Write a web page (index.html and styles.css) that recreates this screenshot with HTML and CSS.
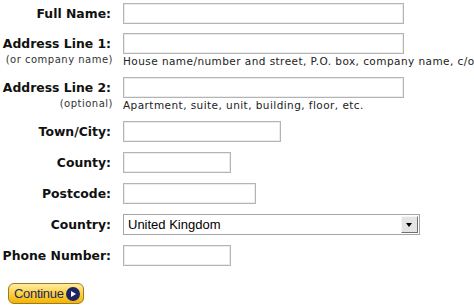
FILE: index.html
```html
<!DOCTYPE html>
<html lang="en">
<head>
    <meta charset="UTF-8">
    <meta name="viewport" content="width=device-width, initial-scale=1.0">
    <title>Delivery Address</title>
    <link rel="stylesheet" href="styles.css">
</head>
<body>
    <form class="address-form" id="addressForm">
        <div class="row">
            <label class="label" for="fullName">Full Name:</label>
            <div class="field"><input type="text" id="fullName" class="input wide"></div>
        </div>
        <div class="row first-address">
            <label class="label" for="addr1">Address Line 1:<span class="note">(or company name)</span></label>
            <div class="field">
                <input type="text" id="addr1" class="input wide">
                <span class="help">House name/number and street, P.O. box, company name, c/o</span>
            </div>
        </div>
        <div class="row">
            <label class="label" for="addr2">Address Line 2:<span class="note">(optional)</span></label>
            <div class="field">
                <input type="text" id="addr2" class="input wide">
                <span class="help">Apartment, suite, unit, building, floor, etc.</span>
            </div>
        </div>
        <div class="row">
            <label class="label" for="town">Town/City:</label>
            <div class="field"><input type="text" id="town" class="input town"></div>
        </div>
        <div class="row">
            <label class="label" for="county">County:</label>
            <div class="field"><input type="text" id="county" class="input short"></div>
        </div>
        <div class="row">
            <label class="label" for="postcode">Postcode:</label>
            <div class="field"><input type="text" id="postcode" class="input postcode"></div>
        </div>
        <div class="row">
            <label class="label" for="country">Country:</label>
            <div class="field">
                <span class="select-wrap">
                    <select id="country" class="select">
                        <option>United Kingdom</option>
                        <option>Ireland</option>
                        <option>France</option>
                    </select>
                    <span class="select-btn"></span>
                </span>
            </div>
        </div>
        <div class="row">
            <label class="label" for="phone">Phone Number:</label>
            <div class="field"><input type="text" id="phone" class="input short"></div>
        </div>

        <button type="submit" class="continue">Continue <span class="arrow"></span></button>
    </form>
</body>
</html>
```

FILE: styles.css
```css
body {
    margin: 0;
    padding: 0;
    font-family: "DejaVu Sans", Verdana, sans-serif;
    color: #000;
    background: #fff;
    overflow: hidden;
}
.address-form {
    padding: 3px 0 0 0;
    display: flex;
    flex-direction: column;
    gap: 10px;
}
.row {
    display: grid;
    grid-template-columns: 111px 1fr;
    column-gap: 12px;
    align-items: start;
}
.first-address {
    margin-top: -1px;
}
.label {
    text-align: right;
    font-weight: bold;
    font-size: 12.4px;
    line-height: 21px;
    color: #111;
    white-space: nowrap;
}
.note {
    display: block;
    font-weight: normal;
    font-size: 10px;
    letter-spacing: 0.5px;
    line-height: 11px;
    color: #333;
    margin-right: -2px;
}
.field {
    display: flex;
    flex-direction: column;
    align-items: flex-start;
}
.help {
    font-size: 10.5px;
    letter-spacing: 0.44px;
    line-height: 12px;
    padding-top: 1px;
    color: #222;
    white-space: nowrap;
}
.input {
    height: 21px;
    box-sizing: border-box;
    border: 1px solid #b4b4b4;
    box-shadow: inset 0 0 0 1px #ececec;
    margin: 0;
    padding: 2px 4px;
    font-family: "Liberation Sans", Arial, sans-serif;
    font-size: 13px;
}
.wide { width: 281px; }
.town { width: 158px; }
.short { width: 108px; }
.postcode { width: 133px; }
.select-wrap {
    position: relative;
    display: block;
    width: 297px;
    height: 21px;
}
.select {
    appearance: none;
    -webkit-appearance: none;
    width: 100%;
    height: 21px;
    box-sizing: border-box;
    border: 1px solid #a5a5a5;
    background: #fff;
    margin: 0;
    padding: 0 4px;
    font-family: "Liberation Sans", Arial, sans-serif;
    font-size: 13px;
    color: #000;
    border-radius: 0;
}
.select-btn {
    position: absolute;
    right: 2px;
    top: 2px;
    width: 17px;
    height: 17px;
    box-sizing: border-box;
    background: #e4e4e4;
    border: 1px solid;
    border-color: #f6f6f6 #707070 #707070 #f6f6f6;
    pointer-events: none;
}
.select-btn::after {
    content: "";
    position: absolute;
    left: 4px;
    top: 6px;
    border-left: 3.5px solid transparent;
    border-right: 3.5px solid transparent;
    border-top: 4px solid #000;
}
.continue {
    align-self: flex-start;
    margin: 7px 0 0 8px;
    width: 76px;
    height: 21px;
    box-sizing: border-box;
    border: 1px solid #9a7a25;
    border-radius: 6px;
    background: linear-gradient(#ffeca0, #fcd44a 45%, #f4b400);
    padding: 0 3px 0 5px;
    display: flex;
    align-items: center;
    justify-content: space-between;
    font-family: "Liberation Sans", Arial, sans-serif;
    font-size: 13px;
    letter-spacing: -0.3px;
    color: #1c2561;
    cursor: pointer;
}
.arrow {
    position: relative;
    width: 14px;
    height: 14px;
    border-radius: 50%;
    background: #1b2566;
}
.arrow::after {
    content: "";
    position: absolute;
    left: 5px;
    top: 4px;
    border-top: 3px solid transparent;
    border-bottom: 3px solid transparent;
    border-left: 5px solid #fff;
}
```
